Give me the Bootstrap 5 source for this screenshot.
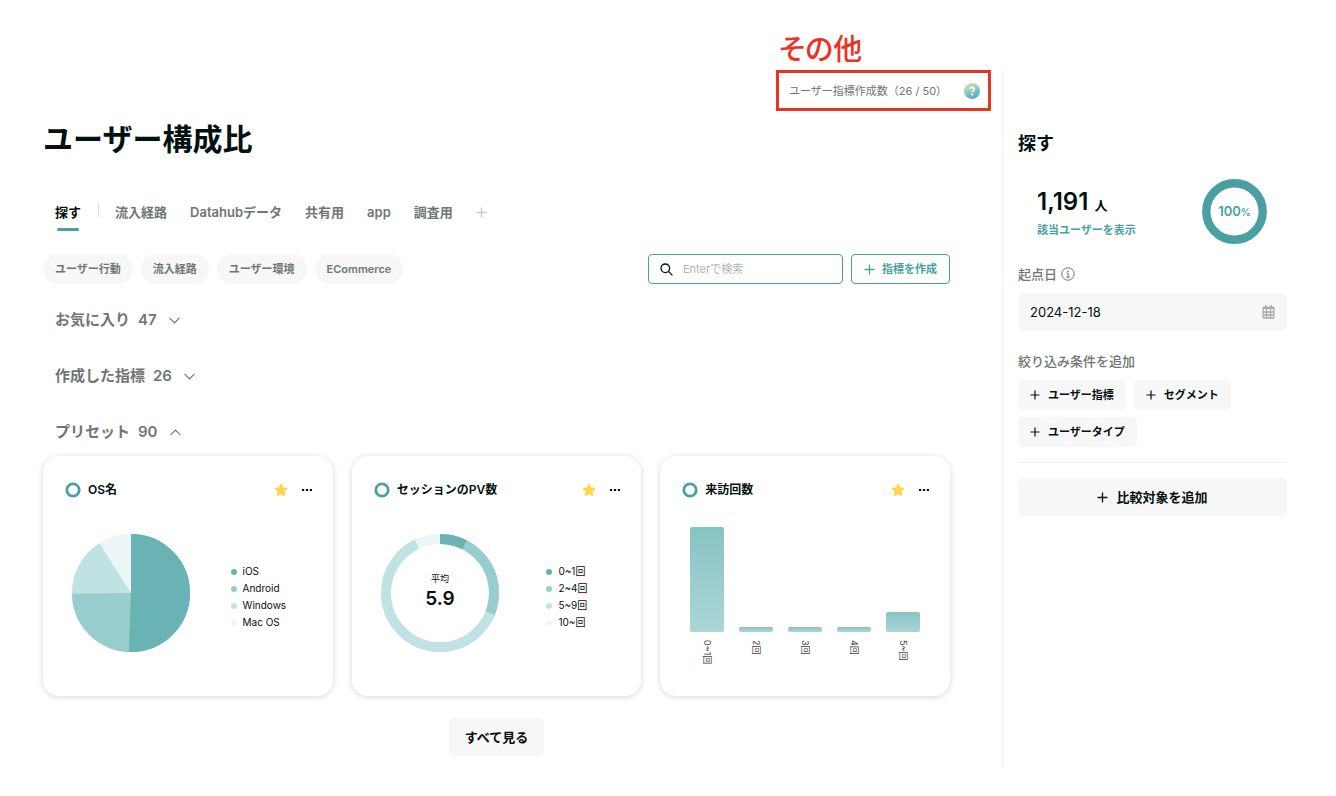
<!DOCTYPE html>
<html lang="ja">
<head>
<meta charset="utf-8">
<meta name="viewport" content="width=device-width, initial-scale=1">
<title>ユーザー構成比</title>
<link href="https://cdn.jsdelivr.net/npm/bootstrap@5.3.0/dist/css/bootstrap.min.css" rel="stylesheet">
<style>
:root{--ink:#03110f;--muted:#6e7674;--teal:#4a9fa0;--soft:#f7f7f7;--line:#f0f1f1;--alert:#ea3323;
  --c1:#69b3b5;--c2:#98cdcd;--c3:#c0e2e2;--c4:#ecf6f7}
body{font-family:Inter,"Noto Sans CJK JP",sans-serif;color:var(--ink);font-size:13px;line-height:20px}
svg{display:block;flex:none}
button{white-space:nowrap}
a{text-decoration:none}
.page-main{padding:0 52px 40px 43px;min-width:0}
.page-side{width:334px;margin:70px 0 27px;padding:62px 49px 0 15px;border-left:1px solid var(--line)}
.note{padding-top:24px;margin-right:-41px}
.note-title{color:var(--alert);font-size:29px;line-height:46px;width:215px;padding-left:3px;font-weight:500;font-family:"Noto Sans CJK JP",sans-serif;font-feature-settings:"palt"}
.note-box{border:3px solid var(--alert);width:215px;height:41px;padding:0 8px 0 10px;color:var(--muted);font-size:11px}
.page-title{font-size:30px;line-height:40px;margin:8px 0 0}
.tabs{margin-top:43px;height:31px;gap:23px;padding-left:12px;font-weight:600;line-height:21px}
.tabs a{color:var(--muted)}
.tabs .current{color:var(--ink);position:relative;margin-right:-6px}
.tabs .current::after{content:"";position:absolute;left:2px;right:2px;top:26px;height:3px;border-radius:2px;background:var(--teal)}
.tab-rule{width:1px;height:15px;background:#dfe1e1;margin-right:-7px}
.plain{border:0;background:none;padding:0;color:inherit}
.tab-add{color:#c4c8c7}
.tools{margin-top:21px}
.chips{gap:8px}
.chip{border:0;border-radius:15px;height:30px;padding:0 12px;background:var(--soft);color:var(--muted);font-size:11px;font-weight:600}
.search{width:195px;height:30px;border:1px solid var(--teal);border-radius:4px;padding:0 11px;gap:10px}
.search input{border:0;outline:0;min-width:0;width:100%;font-size:11px;padding:0;background:none}
.search input::placeholder{color:#b0b4b3;opacity:1}
.make{height:30px;border:1px solid var(--teal);border-radius:4px;background:#fff;color:var(--teal);font-size:11px;font-weight:600;padding:0 12px;gap:7px}
.group{font-size:15px;line-height:24px;font-weight:600;color:var(--muted);padding-left:12px;margin:0 0 32px}
.group button{gap:8px;font-weight:600}
.group svg{margin-left:4px}
.metrics{--bs-gutter-x:19px;margin-top:-20px}
.metric{height:240px;border:0;border-radius:16px;box-shadow:0 1px 6px rgba(0,0,0,.16);padding:22px 21px 0 22px}
.metric header{height:24px;font-size:12px}
.metric h3{font-size:12px;font-weight:600;margin:0 auto 0 7px}
.metric .star{margin-right:14px}
.chart{margin-top:32px;padding-left:7px}
.legend{list-style:none;margin:0 auto;padding:7px 0 0 15px;font-size:10px;line-height:17px}
.legend li::before{content:"";display:inline-block;width:6px;height:6px;border-radius:3px;background:var(--k);margin-right:6px}
.bars{margin-top:25px;padding:0 9px 0 8px}
.bar-col{width:34px}
.bar-box{height:105px}
.bar-fill{border-radius:2px;background:linear-gradient(#88c3c3,#abd6d6)}
.bar-label{writing-mode:vertical-rl;text-orientation:sideways;font-size:9px;line-height:12px;margin-top:8px;color:#3c4544}
.soft-btn{border:0;border-radius:5px;background:var(--soft);color:var(--ink);font-weight:600}
.all-btn{font-size:13px;height:38px;padding:0 16px;margin-top:22px}
.side-title{font-size:18px;line-height:24px;margin:0}
.stats{margin:22px 20px 0 19px;height:66px}
.stat-text{padding-top:6px}
.count{font-size:24px;line-height:28px;font-weight:600}
.count span{font-size:13px}
.stats a{color:var(--teal);font-size:11px;font-weight:600}
.side-label{color:var(--muted);font-weight:500}
.date-box{height:38px;border-radius:5px;background:var(--soft);margin-top:9px;padding:0 12px}
.date-box input{border:0;background:none;outline:0;min-width:0;font-size:13px;padding:0;color:var(--ink)}
.conds{gap:7px 8px;margin-top:9px}
.conds button{height:30px;font-size:11px;padding:0 12px;gap:8px}
.side-rule{margin:15px 0;border:0;border-top:1px solid #eeefef;opacity:1}
.compare{height:38px;font-size:13px;gap:8px}
</style>
</head>
<body>
<svg width="0" height="0" class="position-absolute" aria-hidden="true">
  <symbol id="plus" viewBox="0 0 10 10"><path d="M5 .5v9M.5 5h9" fill="none" stroke="currentColor" stroke-width="1.2"/></symbol>
  <symbol id="down" viewBox="0 0 10 6"><path d="M.5.7 5 5.200 9.500.7" fill="none" stroke="currentColor"/></symbol>
  <symbol id="up" viewBox="0 0 10 6"><path d="M.5 5.300 5 .8l4.500 4.500" fill="none" stroke="currentColor"/></symbol>
  <symbol id="ring" viewBox="0 0 16 16"><circle cx="8" cy="8" r="6.200" fill="none" stroke="#4a9fa0" stroke-width="2.800"/></symbol>
  <symbol id="star" viewBox="0 0 14 14"><path d="M7 .7l1.900 4 4.400.6-3.200 3.100.8 4.500L7 10.800l-3.900 2.100.8-4.500L.7 5.300l4.400-.6z" fill="#fad748" stroke="#fad748" stroke-width=".8" stroke-linejoin="round"/></symbol>
  <symbol id="dots" viewBox="0 0 10 4"><path d="M0 1h2.200v2H0zM3.900 1h2.200v2H3.900zM7.800 1H10v2H7.800z" fill="#03110f"/></symbol>
</svg>
<div class="d-flex">
  <main class="page-main flex-grow-1">
    <div class="note d-flex flex-column align-items-end">
      <div class="note-title">その他</div>
      <div class="note-box d-flex align-items-center justify-content-between">
        <span>ユーザー指標作成数（26 / 50）</span>
        <button class="plain" aria-label="ヘルプ"><svg width="16" height="16" viewBox="0 0 16 16"><defs><linearGradient id="hg" x1=".2" y1="0" x2=".7" y2="1"><stop offset="0" stop-color="#e9dfae"/><stop offset=".5" stop-color="#7fcdbc"/><stop offset="1" stop-color="#5a9fd0"/></linearGradient></defs><circle cx="8" cy="8" r="8" fill="url(#hg)"/><path d="M6 6.300C6 5 6.900 4.400 8.100 4.400s2.100.7 2.100 1.800c0 1.500-2 1.500-2 3" fill="none" stroke="#fff" stroke-width="1.700"/><circle cx="8.200" cy="11.400" r="1" fill="#fff"/></svg></button>
      </div>
    </div>
    <h1 class="page-title fw-bold">ユーザー構成比</h1>
    <nav class="tabs d-flex">
      <a href="#" class="current">探す</a><span class="tab-rule"></span>
      <a href="#">流入経路</a><a href="#">Datahubデータ</a><a href="#">共有用</a><a href="#">app</a><a href="#">調査用</a>
      <button class="plain tab-add align-self-start" aria-label="タブを追加"><svg width="11" height="21"><use href="#plus" y="5" width="11" height="11"/></svg></button>
    </nav>
    <div class="tools d-flex justify-content-between">
      <div class="chips d-flex">
        <button class="chip">ユーザー行動</button><button class="chip">流入経路</button><button class="chip">ユーザー環境</button><button class="chip">ECommerce</button>
      </div>
      <div class="d-flex gap-2">
        <label class="search d-flex align-items-center">
          <svg width="13" height="13" viewBox="0 0 13 13" fill="none" stroke="#03110f" stroke-width="1.300"><circle cx="5.300" cy="5.300" r="4.300"/><path d="m8.400 8.400 4 4"/></svg>
          <input type="text" placeholder="Enterで検索" aria-label="検索">
        </label>
        <button class="make d-flex align-items-center"><svg width="11" height="11"><use href="#plus"/></svg>指標を作成</button>
      </div>
    </div>
    <div class="pt-4">
      <h2 class="group"><button class="plain d-flex align-items-center"><span>お気に入り</span><span>47</span><svg width="11" height="7"><use href="#down"/></svg></button></h2>
      <h2 class="group"><button class="plain d-flex align-items-center"><span>作成した指標</span><span>26</span><svg width="11" height="7"><use href="#down"/></svg></button></h2>
      <h2 class="group"><button class="plain d-flex align-items-center"><span>プリセット</span><span>90</span><svg width="11" height="7"><use href="#up"/></svg></button></h2>
    </div>
    <div class="row metrics">
      <div class="col-4"><section class="card metric">
        <header class="d-flex align-items-center"><svg width="16" height="16"><use href="#ring"/></svg><h3>OS名</h3>
          <button class="plain star" aria-label="お気に入り"><svg width="14" height="14"><use href="#star"/></svg></button><button class="plain" aria-label="メニュー"><svg width="10" height="4"><use href="#dots"/></svg></button></header>
        <div class="chart d-flex align-items-center">
          <svg width="118" height="118" viewBox="0 0 118 118"><g fill="none" stroke-width="59" transform="rotate(-90 59 59)">
            <circle cx="59" cy="59" r="29.500" pathLength="100" stroke="#ecf6f7"/>
            <circle cx="59" cy="59" r="29.500" pathLength="100" stroke="#c0e2e2" stroke-dasharray="91 100"/>
            <circle cx="59" cy="59" r="29.500" pathLength="100" stroke="#98cdcd" stroke-dasharray="74.800 100"/>
            <circle cx="59" cy="59" r="29.500" pathLength="100" stroke="#69b3b5" stroke-dasharray="50.600 100"/></g></svg>
          <ul class="legend"><li style="--k:var(--c1)">iOS</li><li style="--k:var(--c2)">Android</li><li style="--k:var(--c3)">Windows</li><li style="--k:var(--c4)">Mac OS</li></ul>
        </div>
      </section></div>
      <div class="col-4"><section class="card metric">
        <header class="d-flex align-items-center"><svg width="16" height="16"><use href="#ring"/></svg><h3>セッションのPV数</h3>
          <button class="plain star" aria-label="お気に入り"><svg width="14" height="14"><use href="#star"/></svg></button><button class="plain" aria-label="メニュー"><svg width="10" height="4"><use href="#dots"/></svg></button></header>
        <div class="chart d-flex align-items-center">
          <svg width="118" height="118" viewBox="0 0 118 118"><g fill="none" stroke-width="10" transform="rotate(-90 59 59)">
            <circle cx="59" cy="59" r="54" pathLength="100" stroke="#ecf6f7"/>
            <circle cx="59" cy="59" r="54" pathLength="100" stroke="#c0e2e2" stroke-dasharray="93 100"/>
            <circle cx="59" cy="59" r="54" pathLength="100" stroke="#98cdcd" stroke-dasharray="31.100 100"/>
            <circle cx="59" cy="59" r="54" pathLength="100" stroke="#69b3b5" stroke-dasharray="7.500 100"/></g>
            <g text-anchor="middle" fill="#03110f"><text x="59" y="48" font-size="9">平均</text><text x="59" y="71" font-size="19" font-weight="600">5.9</text></g></svg>
          <ul class="legend"><li style="--k:var(--c1)">0~1回</li><li style="--k:var(--c2)">2~4回</li><li style="--k:var(--c3)">5~9回</li><li style="--k:var(--c4)">10~回</li></ul>
        </div>
      </section></div>
      <div class="col-4"><section class="card metric">
        <header class="d-flex align-items-center"><svg width="16" height="16"><use href="#ring"/></svg><h3>来訪回数</h3>
          <button class="plain star" aria-label="お気に入り"><svg width="14" height="14"><use href="#star"/></svg></button><button class="plain" aria-label="メニュー"><svg width="10" height="4"><use href="#dots"/></svg></button></header>
        <div class="bars d-flex justify-content-between">
          <div class="bar-col d-flex flex-column align-items-center"><div class="bar-box w-100 d-flex align-items-end"><div class="bar-fill w-100" style="height:100%"></div></div><span class="bar-label">0~1回</span></div>
          <div class="bar-col d-flex flex-column align-items-center"><div class="bar-box w-100 d-flex align-items-end"><div class="bar-fill w-100" style="height:5%"></div></div><span class="bar-label">2回</span></div>
          <div class="bar-col d-flex flex-column align-items-center"><div class="bar-box w-100 d-flex align-items-end"><div class="bar-fill w-100" style="height:5%"></div></div><span class="bar-label">3回</span></div>
          <div class="bar-col d-flex flex-column align-items-center"><div class="bar-box w-100 d-flex align-items-end"><div class="bar-fill w-100" style="height:5%"></div></div><span class="bar-label">4回</span></div>
          <div class="bar-col d-flex flex-column align-items-center"><div class="bar-box w-100 d-flex align-items-end"><div class="bar-fill w-100" style="height:19%"></div></div><span class="bar-label">5~回</span></div>
        </div>
      </section></div>
    </div>
    <div class="text-center"><button class="soft-btn all-btn">すべて見る</button></div>
  </main>
  <aside class="page-side flex-shrink-0">
    <h2 class="side-title fw-bold">探す</h2>
    <div class="stats d-flex align-items-center justify-content-between">
      <div class="stat-text"><div class="count">1,191 <span>人</span></div><a href="#">該当ユーザーを表示</a></div>
      <svg width="65" height="65" viewBox="0 0 65 65"><circle cx="32.500" cy="32.500" r="28.200" fill="none" stroke="#4a9fa0" stroke-width="8.400"/><text x="32.500" y="37" text-anchor="middle" fill="#4a9fa0" font-size="13" font-weight="600">100<tspan font-size="10">%</tspan></text></svg>
    </div>
    <div class="pt-3 mt-1">
      <label class="side-label d-flex align-items-center gap-1" for="date">起点日
        <svg width="14" height="14" viewBox="0 0 14 14" fill="none" stroke="#6e7674"><circle cx="7" cy="7" r="6.200"/><path d="M5.500 6.200h1.700v4M5.200 10.200h3.600"/><path d="M6.300 4.200h1.400" stroke-width="1.400"/></svg></label>
      <div class="date-box d-flex align-items-center justify-content-between"><input id="date" type="text" value="2024-12-18">
        <svg width="13" height="14" viewBox="0 0 13 14" fill="#a8acab"><path d="M3 0h1.400v1.500h4.200V0H10v1.500h1.500q1 0 1 1V4H.5V2.500q0-1 1-1H3z"/><path d="M1.200 4v8.500q0 .5.500.5h9.600q.5 0 .5-.5V4M.5 7h12M.5 10h12M4.500 4v9M8.500 4v9" fill="none" stroke="#a8acab" stroke-width="1.300"/></svg></div>
    </div>
    <div class="pt-3 mt-1">
      <div class="side-label">絞り込み条件を追加</div>
      <div class="conds d-flex flex-wrap">
        <button class="soft-btn d-flex align-items-center"><svg width="10" height="10"><use href="#plus"/></svg>ユーザー指標</button>
        <button class="soft-btn d-flex align-items-center"><svg width="10" height="10"><use href="#plus"/></svg>セグメント</button>
        <button class="soft-btn d-flex align-items-center"><svg width="10" height="10"><use href="#plus"/></svg>ユーザータイプ</button>
      </div>
    </div>
    <hr class="side-rule">
    <button class="soft-btn compare w-100 d-flex align-items-center justify-content-center"><svg width="11" height="11"><use href="#plus"/></svg>比較対象を追加</button>
  </aside>
</div>
<script src="https://cdn.jsdelivr.net/npm/bootstrap@5.3.0/dist/js/bootstrap.bundle.min.js"></script>
</body>
</html>
